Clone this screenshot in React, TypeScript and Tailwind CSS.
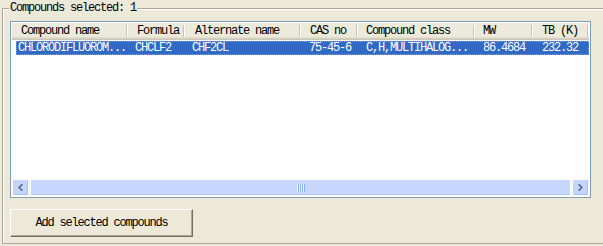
import { ChevronLeft, ChevronRight } from 'lucide-react';

interface Column {
  title: string;
  width: string;
  headPad: string;
  cellPad: string;
  value: string;
}

const columns: Column[] = [
  { title: 'Compound name', width: 'w-[112px]', headPad: 'pl-[5px]', cellPad: 'pl-[1px]', value: 'CHLORODIFLUOROM...' },
  { title: 'Formula', width: 'w-[57px]', headPad: 'pl-[9px]', cellPad: 'pl-[6px]', value: 'CHCLF2' },
  { title: 'Alternate name', width: 'w-[116px]', headPad: 'pl-[10px]', cellPad: 'pl-[6px]', value: 'CHF2CL' },
  { title: 'CAS no', width: 'w-[57px]', headPad: 'pl-[9px]', cellPad: 'pl-[7px]', value: '75-45-6' },
  { title: 'Compound class', width: 'w-[117px]', headPad: 'pl-[8px]', cellPad: 'pl-[7px]', value: 'C,H,MULTIHALOG...' },
  { title: 'MW', width: 'w-[58px]', headPad: 'pl-[8px]', cellPad: 'pl-[7px]', value: '86.4684' },
  { title: 'TB (K)', width: 'flex-1', headPad: 'pl-[9px]', cellPad: 'pl-[8px]', value: '232.32' },
];

function ScrollButton({ dir }: { dir: 'left' | 'right' }) {
  const Icon = dir === 'left' ? ChevronLeft : ChevronRight;
  return (
    <div className="w-[17px] h-[17px] flex items-center justify-center rounded-[2px] border border-[#fff] bg-[#C4D4FB] shadow-[inset_-1px_-1px_0_#A9BFEF]">
      <Icon className="w-[11px] h-[11px] text-[#4D6185]" strokeWidth={3.5} />
    </div>
  );
}

export default function App() {
  return (
    <div className="w-[603px] h-[246px] overflow-hidden bg-[#ECE9D8] pl-[2px] pt-[8px] font-['Liberation_Mono',monospace] text-[12px] tracking-[-1.2px] text-black">
      {/* Group box */}
      <div className="relative h-[236px] w-[640px] border border-[#ACA899] shadow-[inset_1px_1px_0_#fff] pl-[7px] pt-[12px]">
        <span className="absolute left-[6px] top-[-8px] bg-[#ECE9D8] px-[1px] leading-[14px]">
          Compounds selected: 1
        </span>

        {/* List view */}
        <div className="w-[581px] h-[177px] border border-[#7F9DB9] bg-white p-[1px] flex flex-col">
          <div className="h-[17px] flex bg-[#EBEADB] shadow-[inset_0_-1px_0_#CBC7B8,inset_0_-2px_0_#D6D2C2,inset_0_-3px_0_#E2DECD]">
            <div className="w-[4px]" />
            {columns.map((col) => (
              <div key={col.title} className={`${col.width} flex items-center justify-between pb-[2px]`}>
                <span className={`${col.headPad} leading-[14px] whitespace-nowrap`}>{col.title}</span>
                <span className="h-[12px] w-[2px] border-l border-[#C7C5B2] border-r border-r-white" />
              </div>
            ))}
          </div>

          <div className="ml-[4px] mt-[1px] h-[14px] flex items-center bg-[#316AC5] text-white border border-dotted border-[#7FA4E0]">
            {columns.map((col) => (
              <div key={col.title} className={`${col.width} ${col.cellPad} leading-[12px] whitespace-nowrap`}>
                {col.value}
              </div>
            ))}
          </div>

          <div className="flex-1" />

          {/* Horizontal scrollbar */}
          <div className="h-[17px] flex bg-[#F3F1EC]">
            <ScrollButton dir="left" />
            <div className="flex-1 mx-[1px] flex items-center justify-center rounded-[2px] border border-white bg-[#C6D6FC] shadow-[inset_0_-1px_0_#ABC3F5]">
              <div className="flex gap-[1px]">
                <span className="w-[1px] h-[8px] bg-[#EEF4FE] shadow-[1px_0_0_#8CB0F8]" />
                <span className="w-[1px] h-[8px] bg-[#EEF4FE] shadow-[1px_0_0_#8CB0F8]" />
                <span className="w-[1px] h-[8px] bg-[#EEF4FE] shadow-[1px_0_0_#8CB0F8]" />
                <span className="w-[1px] h-[8px] bg-[#EEF4FE] shadow-[1px_0_0_#8CB0F8]" />
              </div>
            </div>
            <ScrollButton dir="right" />
          </div>
        </div>

        <button className="mt-[11px] w-[183px] h-[28px] flex items-center justify-center bg-[#ECE9D8] border border-t-white border-l-white border-r-[#716F64] border-b-[#716F64] shadow-[inset_-1px_-1px_0_#ACA899]">
          Add selected compounds
        </button>
      </div>
    </div>
  );
}
